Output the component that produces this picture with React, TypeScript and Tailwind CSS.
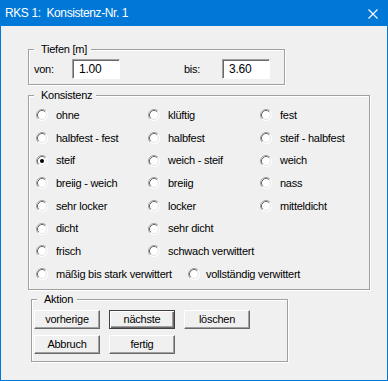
import React from "react"

const rows: string[][] = [
  ["ohne", "klüftig", "fest"],
  ["halbfest - fest", "halbfest", "steif - halbfest"],
  ["steif", "weich - steif", "weich"],
  ["breiig - weich", "breiig", "nass"],
  ["sehr locker", "locker", "mitteldicht"],
  ["dicht", "sehr dicht"],
  ["frisch", "schwach verwittert"],
]

function Radio({ checked = false }: { checked?: boolean }) {
  return (
    <svg width="12" height="12" viewBox="0 0 12 12" className="shrink-0">
      <circle cx="6" cy="6" r="5.5" fill="#fff" />
      <path d="M2.11 9.89 A5.5 5.5 0 0 1 9.89 2.11" fill="none" stroke="#a0a0a0" strokeWidth="1" />
      <path d="M2.82 9.18 A4.5 4.5 0 0 1 9.18 2.82" fill="none" stroke="#696969" strokeWidth="1" />
      <path d="M9.89 2.11 A5.5 5.5 0 0 1 2.11 9.89" fill="none" stroke="#fff" strokeWidth="1" />
      <path d="M9.18 2.82 A4.5 4.5 0 0 1 2.82 9.18" fill="none" stroke="#e3e3e3" strokeWidth="1" />
      {checked && <circle cx="6" cy="6" r="2" fill="#000" />}
    </svg>
  )
}

function Option({ label, checked }: { label: string; checked?: boolean }) {
  return (
    <div className="flex items-center gap-[8px] whitespace-nowrap">
      <Radio checked={checked} />
      <span>{label}</span>
    </div>
  )
}

function Group({ title, className, children }: { title: string; className: string; children: React.ReactNode }) {
  return (
    <div className={"relative border border-[#a0a0a0] shadow-[inset_1px_1px_0_#fff,1px_1px_0_#fff] " + className}>
      <span className="absolute -top-[8px] left-[5px] bg-[#f0f0f0] pl-[7px] pr-[4px] leading-[14px]">{title}</span>
      {children}
    </div>
  )
}

function Button({ label, isDefault = false }: { label: string; isDefault?: boolean }) {
  if (isDefault) {
    return (
      <button className="w-[66px] h-[19px] bg-[#f0f0f0] border border-[#404040] shadow-[inset_1px_1px_0_#fff,inset_-1px_-1px_0_#696969,inset_-2px_-2px_0_#a0a0a0] flex items-center justify-center leading-none">
        {label}
      </button>
    )
  }
  return (
    <button className="w-[66px] h-[19px] bg-[#f0f0f0] border border-t-white border-l-white border-r-[#696969] border-b-[#696969] shadow-[inset_-1px_-1px_0_#a0a0a0] flex items-center justify-center leading-none">
      {label}
    </button>
  )
}

function TextBox({ value }: { value: string }) {
  return (
    <div className="w-[48px] h-[20px] bg-white border border-t-[#a0a0a0] border-l-[#a0a0a0] border-b-white border-r-white shadow-[inset_1px_1px_0_#696969] pl-[6px] flex items-center text-[12px]">
      {value}
    </div>
  )
}

export default function App() {
  return (
    <div
      className="w-[388px] h-[381px] bg-[#f0f0f0] border border-t-0 border-[#0078d7] flex flex-col text-[11px] tracking-[-0.25px] text-black"
      style={{ fontFamily: '"Liberation Sans", Arial, sans-serif' }}
    >
      <div className="h-[26px] bg-[#0078d7] flex items-start justify-between text-white">
        <span className="pl-[4px] pt-[5px] text-[12px] tracking-[-0.4px] leading-[16px]">RKS 1:&nbsp; Konsistenz-Nr. 1</span>
        <svg width="10" height="10" viewBox="0 0 10 10" className="mt-[9px] mr-[9px]">
          <path d="M0.5 0.5 L9.5 9.5 M9.5 0.5 L0.5 9.5" stroke="#fff" strokeWidth="1.1" />
        </svg>
      </div>

      <div className="flex-1 flex flex-col items-start">
        <Group title="Tiefen [m]" className="ml-[27px] mt-[23px] w-[257px] h-[36px]">
          <div className="flex items-center pt-[9px] pl-[5px]">
            <span className="w-[38px]">von:</span>
            <TextBox value="1.00" />
            <span className="ml-[64px] w-[38px]">bis:</span>
            <TextBox value="3.60" />
          </div>
        </Group>

        <Group title="Konsistenz" className="ml-[27px] mt-[10px] w-[342px] h-[195px]">
          <div className="pt-[8px] pl-[7px] flex flex-col">
            {rows.map((r, i) => (
              <div key={i} className="h-[22.66px] grid grid-cols-[112px_112px_112px] items-center">
                {r.map((l) => (
                  <Option key={l} label={l} checked={l === "steif"} />
                ))}
              </div>
            ))}
            <div className="h-[22.66px] flex items-center">
              <div className="w-[152px]">
                <Option label="mäßig bis stark verwittert" />
              </div>
              <div className="flex items-center gap-[6px] whitespace-nowrap">
                <Radio />
                <span>vollständig verwittert</span>
              </div>
            </div>
          </div>
        </Group>

        <Group title="Aktion" className="ml-[30px] mt-[9px] w-[257px] h-[63px]">
          <div className="pt-[10px] pl-[2px] flex flex-col gap-[6px]">
            <div className="flex gap-[9px]">
              <Button label="vorherige" />
              <Button label="nächste" isDefault />
              <Button label="löschen" />
            </div>
            <div className="flex gap-[9px]">
              <Button label="Abbruch" />
              <Button label="fertig" />
            </div>
          </div>
        </Group>
      </div>
    </div>
  )
}
